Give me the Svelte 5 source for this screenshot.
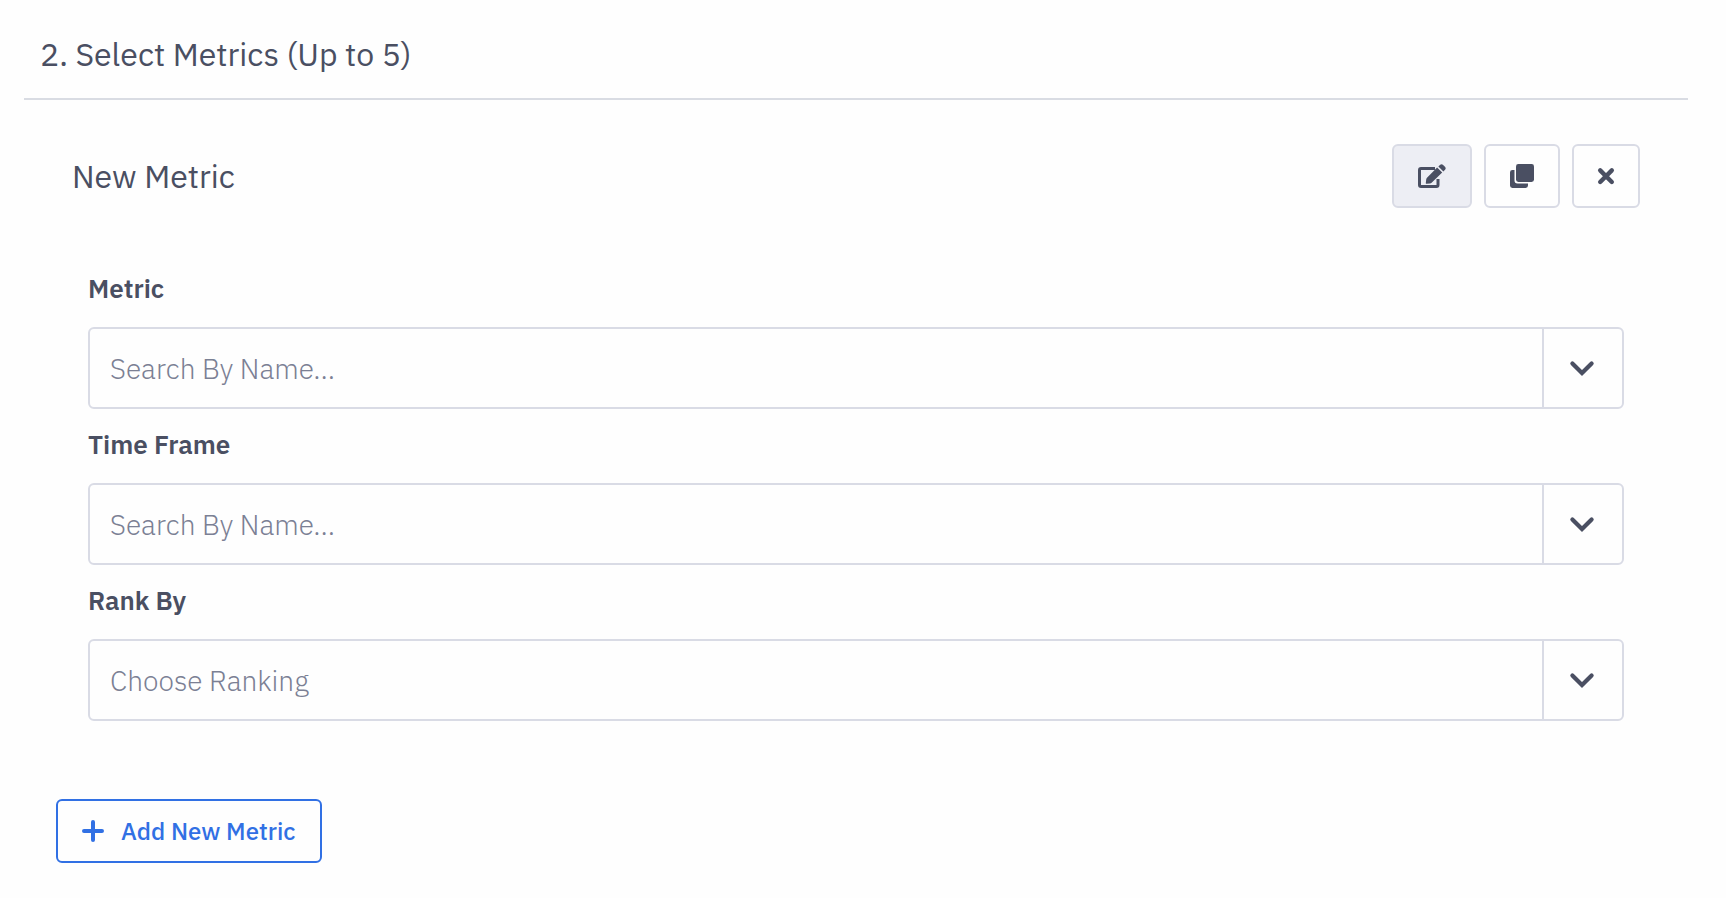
<script>
  let editing = true;
  let fields = [
    { id: "metric", label: "Metric", placeholder: "Search By Name...", value: "" },
    { id: "time-frame", label: "Time Frame", placeholder: "Search By Name...", value: "" },
    { id: "rank-by", label: "Rank By", placeholder: "Choose Ranking", value: "" },
  ];

  function clearFields() {
    fields = fields.map((f) => ({ ...f, value: "" }));
  }
</script>

<section class="step">
  <h2>2. Select Metrics (Up to 5)</h2>

  <div class="metric">
    <header>
      <h3>New Metric</h3>
      <div class="actions">
        <button
          class="btn"
          class:active={editing}
          aria-label="Edit"
          aria-pressed={editing}
          on:click={() => (editing = !editing)}
        >
          <svg width="28" height="24" viewBox="0 0 28 24">
            <path
              d="M17 4.5H3Q1.5 4.5 1.5 6V21Q1.5 22.5 3 22.5H18.5Q20 22.5 20 21V15"
              fill="none"
              stroke="currentColor"
              stroke-width="3"
            />
            <path
              d="M19.1 3.4 24.2 8.5 13.6 18.8Q12.9 19.4 12 19.5L8.6 19.8Q7.7 19.8 7.8 18.9L8.2 15.4Q8.4 14.4 9 13.8Z"
              fill="currentColor"
            />
            <path
              d="M20.4 2.4 22.2.7Q23.5-.4 24.9.7L27.2 3Q28.3 4.3 27.2 5.6L25.4 7.4Z"
              fill="currentColor"
            />
          </svg>
        </button>
        <button class="btn" aria-label="Duplicate">
          <svg width="24" height="24" viewBox="0 0 24 24" fill="currentColor">
            <rect x="6" y="0" width="18" height="18" rx="2.4" />
            <path
              d="M4.5 6H2.4A2.4 2.4 0 0 0 0 8.4V21.6A2.4 2.4 0 0 0 2.4 24H15.6A2.4 2.4 0 0 0 18 21.6V19.5H7.5A3 3 0 0 1 4.5 16.5Z"
            />
          </svg>
        </button>
        <button class="btn" aria-label="Remove" on:click={clearFields}>
          <svg width="16" height="16" viewBox="0 0 16 16">
            <path
              d="M2.2 2.4 13.8 14M13.8 2.4 2.2 14"
              stroke="currentColor"
              stroke-width="4.4"
              stroke-linecap="round"
            />
          </svg>
        </button>
      </div>
    </header>

    <div class="fields">
      {#each fields as field}
        <div class="field">
          <label for={field.id}>{field.label}</label>
          <div class="combo">
            <input
              id={field.id}
              type="text"
              placeholder={field.placeholder}
              autocomplete="off"
              bind:value={field.value}
            />
            <button aria-label="Show {field.label} options">
              <svg width="24" height="16" viewBox="0 0 24 16">
                <path
                  d="M1.4 3.4 11 13 20.6 3.4"
                  fill="none"
                  stroke="currentColor"
                  stroke-width="4.2"
                  stroke-linecap="round"
                />
              </svg>
            </button>
          </div>
        </div>
      {/each}
    </div>
  </div>

  <button class="btn add">
    <svg width="22" height="22" viewBox="0 0 22 22">
      <path
        d="M11 2V20M2 11H20"
        stroke="currentColor"
        stroke-width="4"
        stroke-linecap="round"
      />
    </svg>
    Add New Metric
  </button>
</section>

<style>
  :global(body) {
    background: #fefefe;
    color: #4a4f62;
    font-family: "IBM Plex Sans", Roboto, "Liberation Sans", sans-serif;
  }

  .step {
    padding: 0 38px 36px 24px;
  }

  h2,
  h3 {
    margin: 0;
    font-size: 32px;
    line-height: 40px;
    font-weight: 400;
  }

  h2 {
    padding: 34px 16px 24px;
    border-bottom: 2px solid #d9dce3;
  }

  .metric {
    padding: 44px 48px 78px;
  }

  header {
    display: flex;
    justify-content: space-between;
    align-items: center;
  }

  .actions {
    display: flex;
    gap: 12px;
  }

  button,
  input {
    box-sizing: border-box;
    margin: 0;
    border: 2px solid #d9dbe5;
    border-radius: 6px;
    background: #fefefe;
    color: inherit;
    font-family: inherit;
  }

  button {
    display: flex;
    align-items: center;
    justify-content: center;
    cursor: pointer;
  }

  svg {
    display: block;
    overflow: visible;
  }

  .btn {
    height: 64px;
    padding: 0 24px;
  }

  .active {
    background: #edeef4;
  }

  .fields {
    display: flex;
    flex-direction: column;
    gap: 17px;
    padding: 62px 16px 0;
  }

  label {
    display: block;
    margin-bottom: 21px;
    font-size: 26px;
    line-height: 36px;
    font-weight: 600;
  }

  .combo {
    display: flex;
  }

  .combo input {
    flex: 1;
    min-width: 0;
    height: 82px;
    padding: 0 20px;
    border-radius: 6px 0 0 6px;
    font-size: 28px;
    font-weight: 300;
  }

  .combo input::placeholder {
    color: #7b8094;
    opacity: 1;
  }

  .combo button {
    width: 82px;
    margin-left: -2px;
    padding: 0;
    border-radius: 0 6px 6px 0;
  }

  .add {
    gap: 17px;
    margin-left: 32px;
    border-color: #3170e4;
    color: #3170e4;
    font-size: 24px;
    font-weight: 500;
  }
</style>
